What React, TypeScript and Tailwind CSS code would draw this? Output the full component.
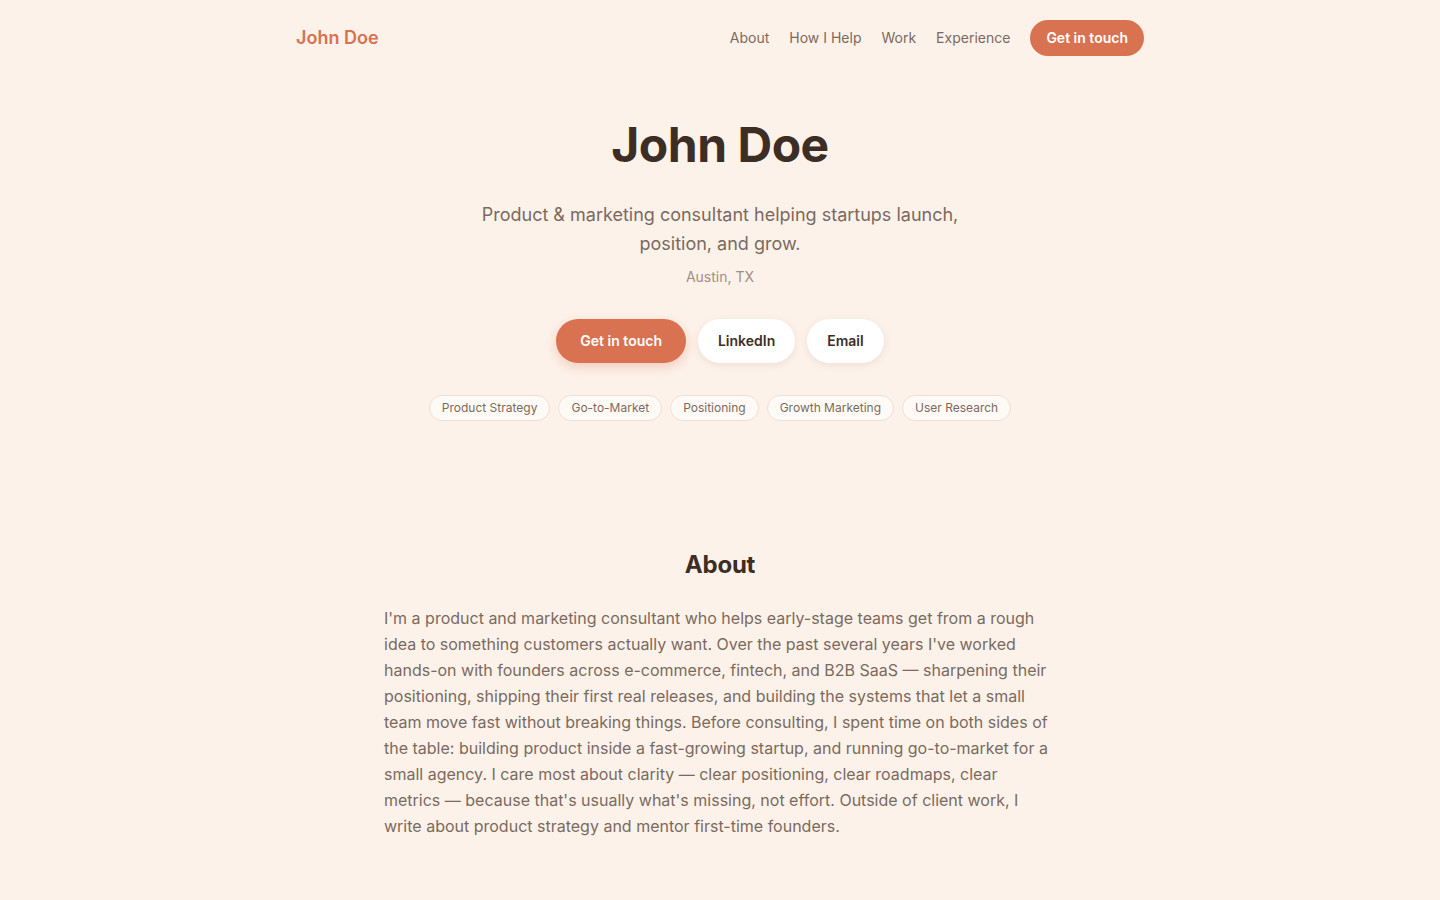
import React from "react";

const links = ["About", "How I Help", "Work", "Experience"];
const skills = ["Product Strategy", "Go-to-Market", "Positioning", "Growth Marketing", "User Research"];

export default function App() {
  return (
    <div
      className="min-h-screen bg-[#fdf2ea] text-[#3d2e25]"
      style={{ fontFamily: "Inter, 'Noto Sans', sans-serif" }}
    >
      <header className="mx-auto flex max-w-4xl items-center justify-between px-6 py-5">
        <a className="text-lg font-semibold text-[#d9714f]">John Doe</a>
        <nav className="flex items-center gap-5">
          {links.map((l) => (
            <a key={l} className="text-sm text-[#7a6a5e]">
              {l}
            </a>
          ))}
          <a className="rounded-full bg-[#d97250] px-4 py-2 text-sm font-semibold text-white">Get in touch</a>
        </nav>
      </header>

      <section className="flex flex-col items-center px-6 pt-[45px] text-center">
        <h1 className="text-5xl font-bold leading-none tracking-[-0.01em] text-[#3d2e25]">John Doe</h1>
        <p className="mt-[31px] max-w-lg text-lg leading-[29px] text-[#7a6a5e]">
          Product &amp; marketing consultant helping startups launch, position, and grow.
        </p>
        <p className="mt-[9px] text-sm text-[#a08f83]">Austin, TX</p>
        <div className="mt-8 flex items-center gap-3">
          <a className="rounded-full bg-[#d97250] px-6 py-3 text-sm font-semibold text-white shadow-[0_4px_12px_rgba(217,114,80,0.3)]">
            Get in touch
          </a>
          <a className="rounded-full bg-white px-5 py-3 text-sm font-semibold text-[#3d2e25] shadow-[0_2px_8px_rgba(120,80,50,0.12)]">
            LinkedIn
          </a>
          <a className="rounded-full bg-white px-5 py-3 text-sm font-semibold text-[#3d2e25] shadow-[0_2px_8px_rgba(120,80,50,0.12)]">
            Email
          </a>
        </div>
        <div className="mt-8 flex flex-wrap items-center justify-center gap-2">
          {skills.map((s) => (
            <span
              key={s}
              className="rounded-full border border-[#efdfd3] bg-[#fffaf6] px-3 py-[4px] text-xs text-[#7a6a5e]"
            >
              {s}
            </span>
          ))}
        </div>
      </section>

      <section className="mx-auto mt-32 max-w-2xl pb-16">
        <h2 className="text-center text-2xl font-bold tracking-[-0.01em] text-[#3d2e25]">About</h2>
        <p className="mt-6 text-base leading-[26px] text-[#7a6a5e]">
          I'm a product and marketing consultant who helps early-stage teams get from a rough idea to something
          customers actually want. Over the past several years I've worked hands-on with founders across
          e-commerce, fintech, and B2B SaaS — sharpening their positioning, shipping their first real releases, and
          building the systems that let a small team move fast without breaking things. Before consulting, I spent
          time on both sides of the table: building product inside a fast-growing startup, and running go-to-market
          for a small agency. I care most about clarity — clear positioning, clear roadmaps, clear metrics — because
          that's usually what's missing, not effort. Outside of client work, I write about product strategy and
          mentor first-time founders.
        </p>
      </section>
    </div>
  );
}
